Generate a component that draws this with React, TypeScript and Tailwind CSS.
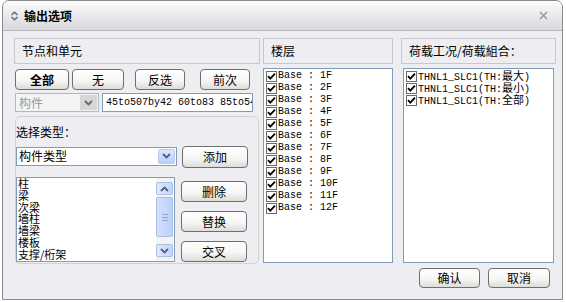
import React from 'react'

const cjk = '"Noto Sans CJK SC", "Liberation Sans", sans-serif'
const mono = '"Liberation Mono", "Noto Sans CJK SC", monospace'

function Btn({ label, className = '', bold = false }: { label: string; className?: string; bold?: boolean }) {
  return (
    <div
      className={`flex items-center justify-center rounded-[4px] border border-[#6e6e6e] bg-[linear-gradient(to_bottom,#ffffff_0%,#f6f6f4_55%,#dcdcd8_100%)] text-[12px] leading-none text-black shrink-0 ${bold ? 'font-bold' : ''} ${className}`}
    >
      {label}
    </div>
  )
}

function Check() {
  return (
    <span className="w-[11px] h-[11px] border border-[#6a6a6a] bg-white flex items-center justify-center shrink-0">
      <svg width="9" height="9" viewBox="0 0 9 9">
        <path d="M1 4.2 L3.3 6.6 L8 1.6" stroke="#000" strokeWidth="1.8" fill="none" />
      </svg>
    </span>
  )
}

function Chevron({ color }: { color: string }) {
  return (
    <svg width="9" height="6" viewBox="0 0 9 6">
      <path d="M1 1 L4.5 4.5 L8 1" stroke={color} strokeWidth="1.8" fill="none" />
    </svg>
  )
}

function Header({ label }: { label: string }) {
  return (
    <div className="h-[26px] border border-[#c8c8cc] flex items-center pl-[7px] text-[12px] text-black">
      {label}
    </div>
  )
}

const floors = ['1F', '2F', '3F', '4F', '5F', '6F', '7F', '8F', '9F', '10F', '11F', '12F']
const loads = ['最大', '最小', '全部']
const types = ['柱', '梁', '次梁', '墙柱', '墙梁', '楼板', '支撑/桁架']

export default function App() {
  return (
    <div className="w-[566px] h-[302px] bg-white overflow-hidden" style={{ fontFamily: cjk }}>
      <div className="ml-[2px] w-[561px] h-[300px] border border-[#8a8a8a] rounded-t-[7px] bg-[#eeeef2] overflow-hidden flex flex-col">
        {/* title bar */}
        <div className="h-[30px] shrink-0 flex items-center border-b border-[#b9b9bd] bg-[linear-gradient(to_bottom,#fbfbfb,#e6e6ea_60%,#dadade)]">
          <svg className="ml-[7px]" width="9" height="10" viewBox="0 0 9 10">
            <path d="M1.5 4 L4.5 1.2 L7.5 4" stroke="#666" strokeWidth="1.4" fill="none" />
            <path d="M1.5 6 L4.5 8.8 L7.5 6" stroke="#666" strokeWidth="1.4" fill="none" />
          </svg>
          <span className="ml-[5px] text-[12px] font-bold text-black">输出选项</span>
          <svg className="ml-auto mr-[14px]" width="9" height="9" viewBox="0 0 9 9">
            <path d="M1 1 L8 8 M8 1 L1 8" stroke="#9a9a9a" strokeWidth="1.5" />
          </svg>
        </div>

        <div className="flex pl-[11px] pt-[7px]">
          {/* left: 节点和单元 */}
          <div className="w-[246px] shrink-0">
            <Header label="节点和单元" />
            <div className="flex mt-[5px] h-[21px] pl-[1px]">
              <Btn label="全部" bold className="w-[54px] h-[21px]" />
              <Btn label="无" className="w-[52px] h-[21px] ml-[3px]" />
              <Btn label="反选" className="w-[50px] h-[21px] ml-[11px]" />
              <Btn label="前次" className="w-[50px] h-[21px] ml-[15px]" />
            </div>
            <div className="flex mt-[3px] h-[19px] pl-[1px]">
              <div className="w-[84px] h-[19px] border border-[#b2b8c2] bg-[#f4f4f4] flex items-center pl-[3px] text-[12px] text-[#9a9a9a]">
                构件
                <span className="ml-auto mr-[1px] w-[17px] h-[15px] bg-[#d6d6d6] flex items-center justify-center">
                  <Chevron color="#6a6a6a" />
                </span>
              </div>
              <div
                className="ml-[3px] w-[151px] h-[19px] border border-[#7f9db9] bg-white flex items-center pl-[3px] overflow-hidden whitespace-nowrap text-[10px] text-black"
                style={{ fontFamily: mono }}
              >
                45to507by42 60to83 85to54
              </div>
            </div>

            {/* 选择类型 group */}
            <div className="mt-[4px] ml-[1px] w-[244px] h-[148px] rounded-[5px] border border-[#d3d3d0]">
              <div className="pt-[8px] text-[12px] leading-[14px] text-black">选择类型：</div>
              <div className="flex items-center mt-[5px]">
                <div className="w-[161px] h-[19px] border border-[#7f9db9] bg-white flex items-center pl-[2px] text-[12px] text-black">
                  构件类型
                  <span className="ml-auto mr-[1px] w-[17px] h-[15px] rounded-[2px] border border-[#b7cbf0] bg-[linear-gradient(to_bottom,#dde8fd,#b9cff9)] flex items-center justify-center">
                    <Chevron color="#4d6185" />
                  </span>
                </div>
                <Btn label="添加" className="ml-[5px] mt-[2px] w-[66px] h-[22px]" />
              </div>
              <div className="flex mt-[9px]">
                <div className="w-[159px] h-[85px] border border-[#7f9db9] bg-white flex">
                  <div className="flex-1 pl-[1px] text-[11px] text-black overflow-hidden">
                    {types.map(t => (
                      <div key={t} className="h-[11.8px] leading-[11.8px]">{t}</div>
                    ))}
                  </div>
                  <div className="w-[17px] flex flex-col bg-[#f3f3ef] py-[4px] mr-[1px]">
                    <div className="h-[13px] rounded-[2px] border border-[#a9bde6] bg-[linear-gradient(to_right,#e0eafd,#c3d5fb)] flex items-center justify-center">
                      <svg width="9" height="6" viewBox="0 0 9 6">
                        <path d="M1 5 L4.5 1.5 L8 5" stroke="#4d6185" strokeWidth="1.8" fill="none" />
                      </svg>
                    </div>
                    <div className="mt-[2px] h-[40px] rounded-[2px] border border-[#a9bde6] bg-[linear-gradient(to_right,#d4e1fd,#bcd0fa)] flex flex-col items-center justify-center gap-[2px]">
                      <span className="w-[6px] h-px bg-[#8da5d8]" />
                      <span className="w-[6px] h-px bg-[#8da5d8]" />
                      <span className="w-[6px] h-px bg-[#8da5d8]" />
                    </div>
                    <div className="mt-auto h-[13px] rounded-[2px] border border-[#a9bde6] bg-[linear-gradient(to_right,#e0eafd,#c3d5fb)] flex items-center justify-center">
                      <Chevron color="#4d6185" />
                    </div>
                  </div>
                </div>
                <div className="ml-[6px] pt-[4px] flex flex-col gap-[9px]">
                  <Btn label="删除" className="w-[66px] h-[21px]" />
                  <Btn label="替换" className="w-[66px] h-[21px]" />
                  <Btn label="交叉" className="w-[66px] h-[21px]" />
                </div>
              </div>
            </div>
          </div>

          {/* middle: 楼层 */}
          <div className="ml-[3px] w-[130px] shrink-0">
            <Header label="楼层" />
            <div className="mt-[4px] h-[195px] border border-[#7f9db9] bg-white pt-[1px] pl-[2px]">
              {floors.map(f => (
                <div key={f} className="h-[12px] flex items-center">
                  <Check />
                  <span className="ml-[1px] text-[10px] leading-[12px] text-black whitespace-pre" style={{ fontFamily: mono }}>
                    {'Base : ' + f}
                  </span>
                </div>
              ))}
            </div>
          </div>

          {/* right: 荷载 */}
          <div className="ml-[8px] w-[155px] shrink-0">
            <Header label="荷载工况/荷载組合：" />
            <div className="mt-[4px] mx-[2px] h-[195px] border border-[#7f9db9] bg-white pt-[1px] pl-[2px]">
              {loads.map(l => (
                <div key={l} className="h-[12px] flex items-center">
                  <Check />
                  <span className="ml-[1px] text-[10px] leading-[12px] text-black whitespace-pre" style={{ fontFamily: mono }}>
                    THNL1_SLC1(TH:<span className="text-[11px]" style={{ fontFamily: cjk }}>{l}</span>)
                  </span>
                </div>
              ))}
            </div>
            <div className="flex justify-end gap-[8px] mt-[5px] pr-[6px]">
              <Btn label="确认" className="w-[61px] h-[20px]" />
              <Btn label="取消" className="w-[62px] h-[20px]" />
            </div>
          </div>
        </div>
      </div>
    </div>
  )
}
